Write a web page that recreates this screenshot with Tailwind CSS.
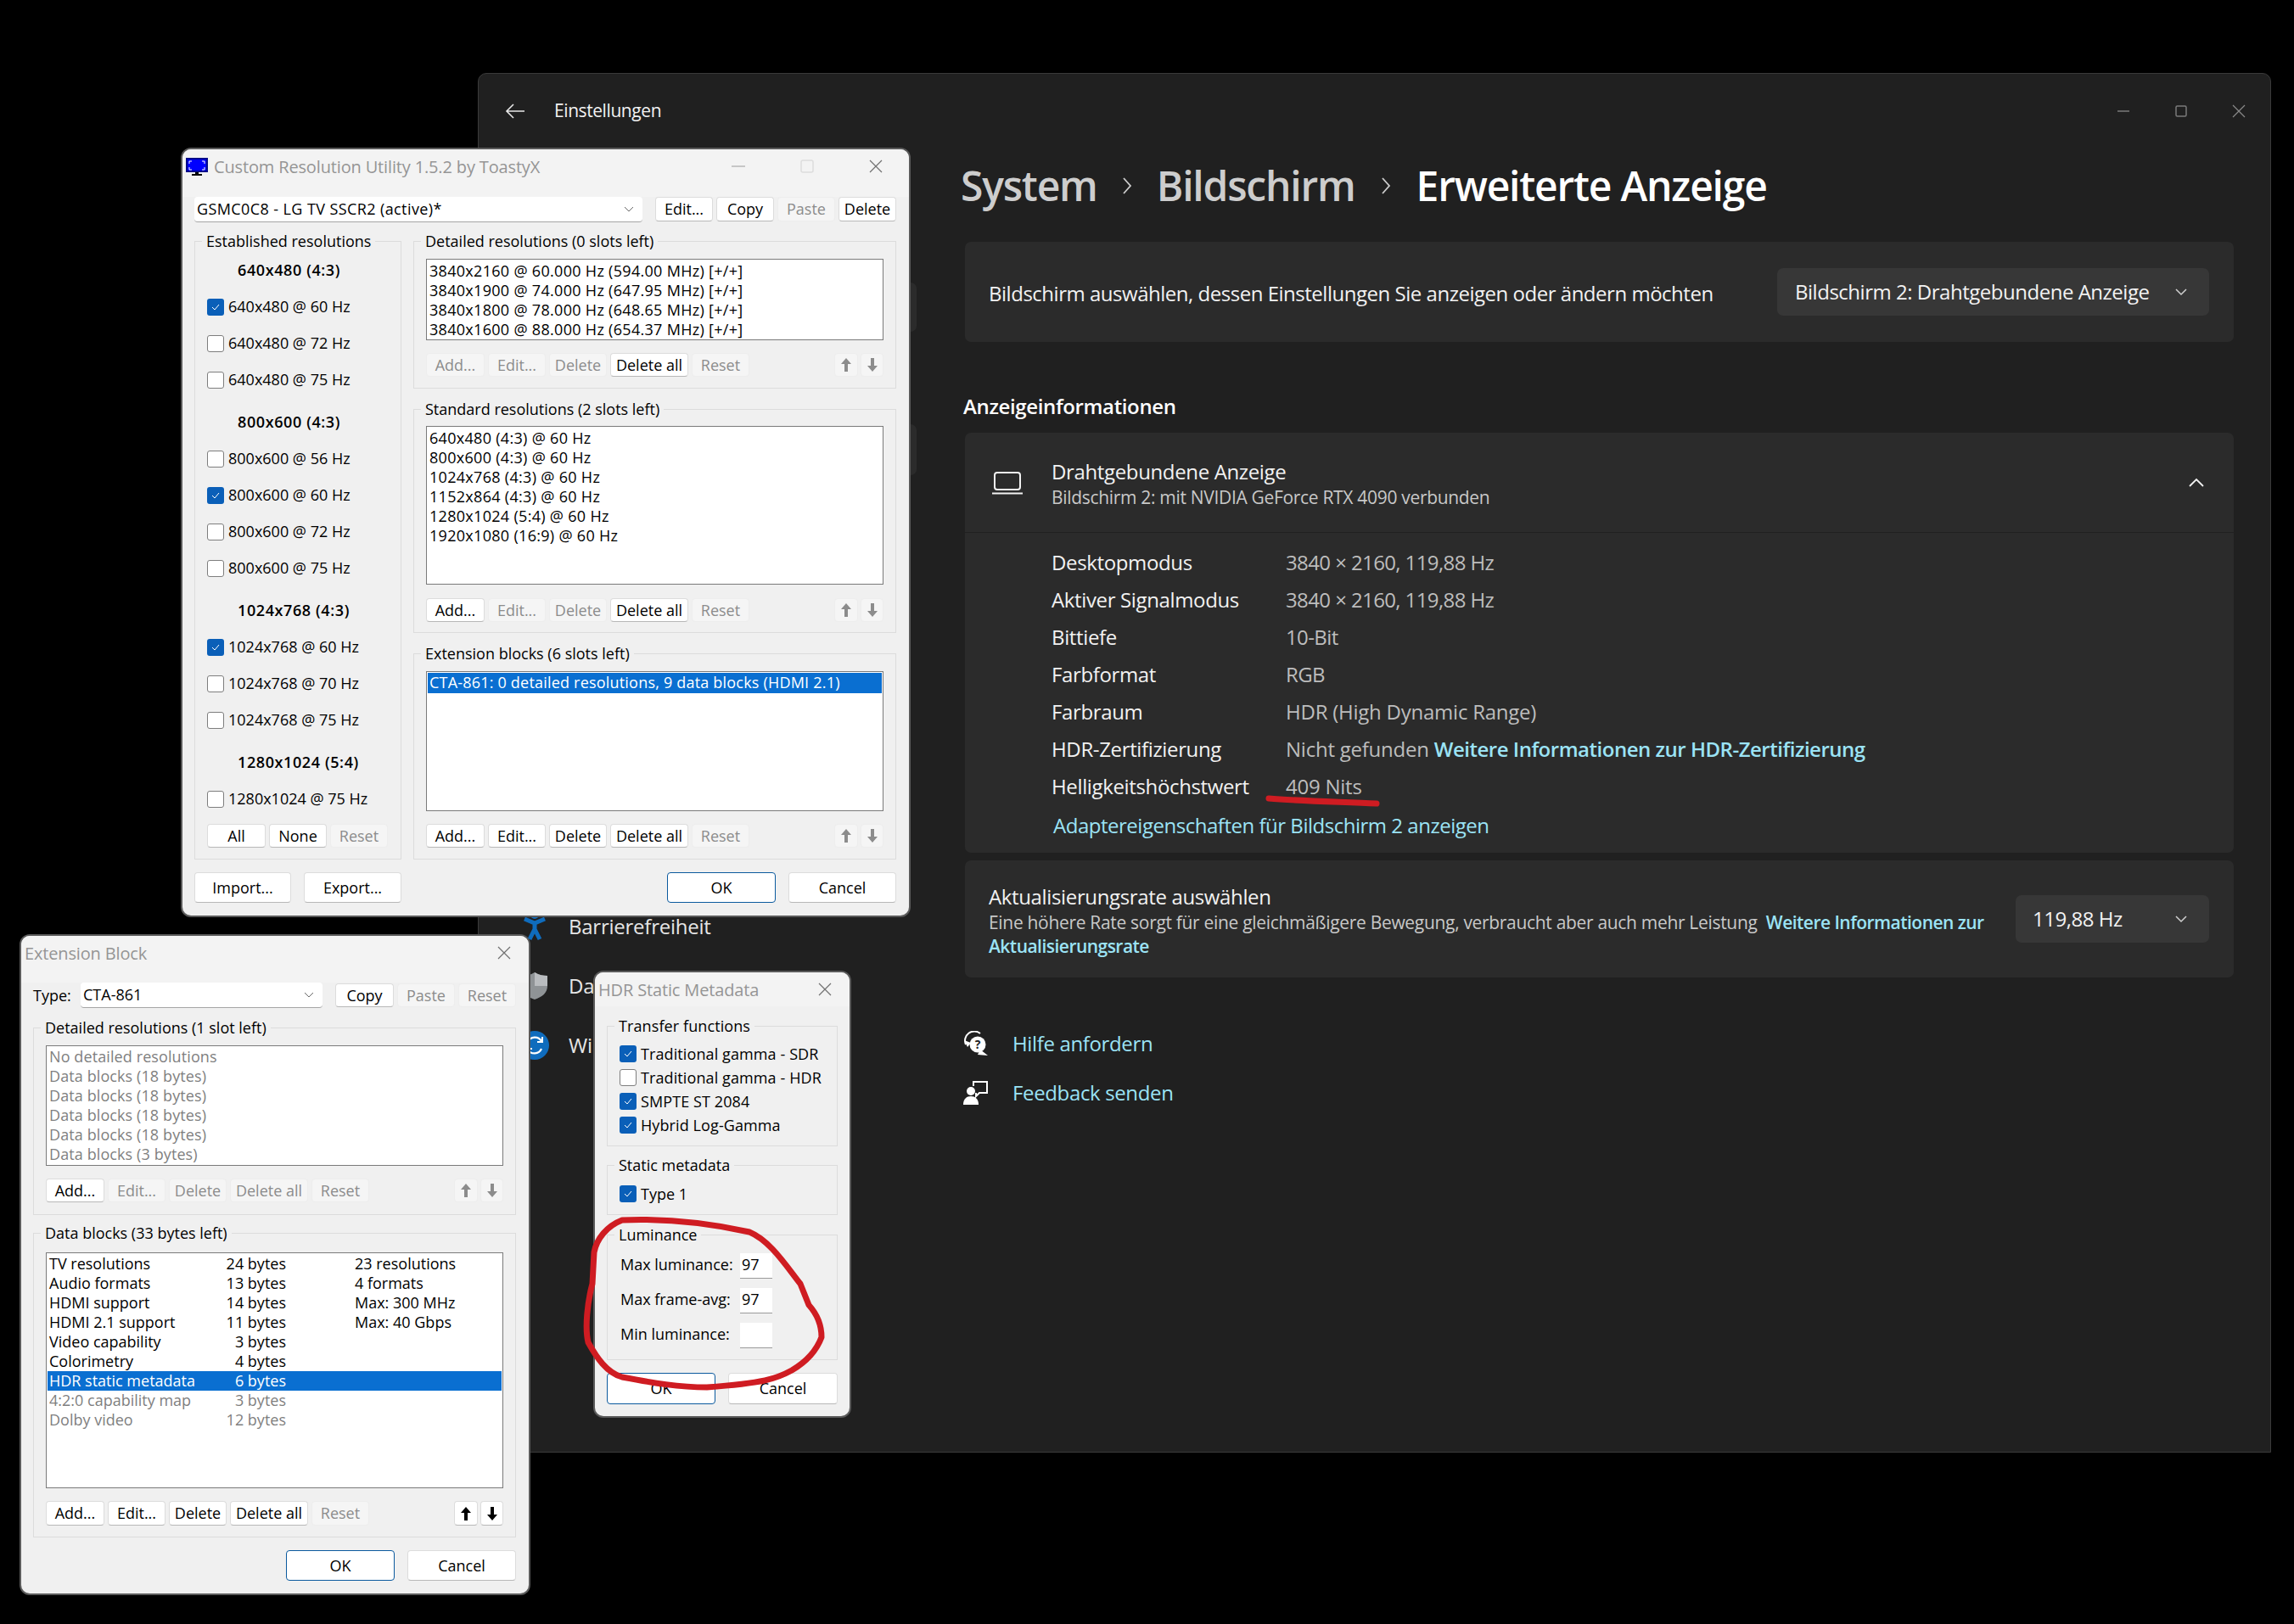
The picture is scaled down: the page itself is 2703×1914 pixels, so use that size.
<!DOCTYPE html>
<html lang="de">
<head>
  <meta charset="UTF-8" />
  <title>Erweiterte Anzeige</title>
  <script src="https://cdn.jsdelivr.net/npm/@tailwindcss/browser@4"></script>
</head>
<body class="bg-black">
<div class="relative w-[2703px] h-[1914px] overflow-hidden bg-black font-['Open_Sans','Noto_Sans',sans-serif]">

  <!-- settings window -->
  <div class="absolute left-[563px] top-[86px] w-[2113px] h-[1626px] bg-[#202020] border border-[#3a3a3a] rounded-t-[10px] text-white">
    <div class="flex items-center h-[87px]">
      <svg class="ml-[31px] w-[24px] h-[22px]" viewBox="0 0 24 22" fill="none" stroke="#e8e8e8" stroke-width="1.6"><path d="M23 11H2M10 3l-8 8 8 8"/></svg>
      <span class="ml-[34px] text-[21px] tracking-[-0.02em] text-[#f2f2f2]">Einstellungen</span>
      <div class="ml-auto flex items-center gap-[52px] pr-[29px]">
        <svg class="w-[16px] h-[16px]" viewBox="0 0 16 16" stroke="#7a7a7a" stroke-width="1.5"><path d="M1 8h14"/></svg>
        <svg class="w-[16px] h-[16px]" viewBox="0 0 16 16" fill="none" stroke="#7a7a7a" stroke-width="1.5"><rect x="2" y="2" width="12" height="12" rx="1.5"/></svg>
        <svg class="w-[16px] h-[16px]" viewBox="0 0 16 16" stroke="#8a8a8a" stroke-width="1.2"><path d="M1 1l14 14M15 1L1 15"/></svg>
      </div>
    </div>
    <div class="flex">
      <!-- nav, mostly covered by the dialogs -->
      <div class="w-[573px] shrink-0">
        <div class="h-[58px] mt-[159px] ml-[60px] w-[456px] rounded-[7px] bg-[#2b2b2b]"></div>
        <div class="h-[60px] mt-[109px] ml-[60px] w-[456px] rounded-[7px] bg-[#2b2b2b]"></div>
        <div class="mt-[497px] text-[24px] tracking-[-0.01em] text-[#e6e6e6]">
          <div class="flex items-center h-[70px] pl-[49px] gap-[23px]">
            <svg class="w-[34px] h-[34px]" viewBox="0 0 34 34" fill="none" stroke="#0f6cbd" stroke-width="5"><circle cx="17" cy="3" r="5" fill="#0f6cbd" stroke="none"/><path d="M5 8l12 5 12-5M17 13v7M17 20l-6 12M17 20l6 12"/></svg>
            <span>Barrierefreiheit</span>
          </div>
          <div class="flex items-center h-[70px] pl-[49px] gap-[23px]">
            <svg class="w-[34px] h-[34px]" viewBox="0 0 34 34"><path d="M17 1c5 3 10 4 15 4v12c0 8-6 13-15 16C8 30 2 25 2 17V5c5 0 10-1 15-4z" fill="#8f9396"/><path d="M17 1c5 3 10 4 15 4v12H17z" fill="#b9bcbf"/></svg>
            <span>Da</span>
          </div>
          <div class="flex items-center h-[70px] pl-[49px] gap-[23px]">
            <svg class="w-[34px] h-[34px]" viewBox="0 0 34 34" fill="none"><circle cx="17" cy="17" r="17" fill="#0f6cbd"/><path d="M9 13a9 9 0 0 1 16-1M25 21a9 9 0 0 1-16 1" stroke="#fff" stroke-width="2.2"/><path d="M26 7v6h-6M8 27v-6h6" stroke="#fff" stroke-width="2"/></svg>
            <span>Wi</span>
          </div>
        </div>
      </div>

      <!-- content -->
      <div class="w-[1495px] shrink-0">
        <div class="flex items-center h-[90px] -ml-[5px] text-[48px] font-semibold tracking-[-0.025em] text-[#cdcdcd]">
          <span>System</span>
          <svg class="mx-[29px] w-[12px] h-[22px]" viewBox="0 0 12 22" fill="none" stroke="#cdcdcd" stroke-width="1.8"><path d="M2 2l8 9-8 9"/></svg>
          <span>Bildschirm</span>
          <svg class="mx-[30px] w-[12px] h-[22px]" viewBox="0 0 12 22" fill="none" stroke="#cdcdcd" stroke-width="1.8"><path d="M2 2l8 9-8 9"/></svg>
          <span class="text-white">Erweiterte Anzeige</span>
        </div>

        <div class="mt-[21px] h-[118px] flex items-center justify-between pl-[28px] pr-[29px] bg-[#2b2b2b] rounded-[7px] text-[#f2f2f2]">
          <span class="text-[24px] tracking-[-0.02em] pt-[4px]">Bildschirm auswählen, dessen Einstellungen Sie anzeigen oder ändern möchten</span>
          <div class="w-[509px] h-[56px] flex items-center justify-between pl-[21px] pr-[26px] bg-[#373737] rounded-[7px] text-[24px] tracking-[-0.02em]">
            <span>Bildschirm 2: Drahtgebundene Anzeige</span>
            <svg class="w-[14px] h-[9px]" viewBox="0 0 14 9" fill="none" stroke="#d0d0d0" stroke-width="1.5"><path d="M1 1l6 6 6-6"/></svg>
          </div>
        </div>

        <div class="h-[107px] flex items-end pb-[14px] -ml-[2px] text-[24px] font-semibold tracking-[-0.015em] leading-[34px]">Anzeigeinformationen</div>

        <div class="h-[117px] flex items-center pl-[32px] pr-[35px] bg-[#2b2b2b] rounded-t-[7px]">
          <svg class="w-[36px] h-[28px]" viewBox="0 0 36 28" fill="none" stroke="#f2f2f2" stroke-width="2"><rect x="3" y="2" width="30" height="20" rx="3"/><path d="M0 26.5h36"/></svg>
          <div class="ml-[34px] flex-1 pt-[2px]">
            <div class="text-[24px] tracking-[-0.015em] leading-[32px] text-[#f2f2f2]">Drahtgebundene Anzeige</div>
            <div class="text-[21px] tracking-[-0.015em] leading-[28px] text-[#c8c8c8]">Bildschirm 2: mit NVIDIA GeForce RTX 4090 verbunden</div>
          </div>
          <svg class="w-[18px] h-[11px]" viewBox="0 0 18 11" fill="none" stroke="#f2f2f2" stroke-width="1.8"><path d="M1 10l8-8 8 8"/></svg>
        </div>
        <div class="mt-[1px] h-[377px] pt-[13px] pl-[102px] bg-[#2b2b2b] rounded-b-[7px] text-[24px] tracking-[-0.015em]">
          <div class="grid grid-cols-[276px_1fr] auto-rows-[44px] items-center text-[#f2f2f2]">
            <span>Desktopmodus</span><span class="text-[#bdbdbd] tracking-[-0.025em]">3840 × 2160, 119,88 Hz</span>
            <span>Aktiver Signalmodus</span><span class="text-[#bdbdbd] tracking-[-0.025em]">3840 × 2160, 119,88 Hz</span>
            <span>Bittiefe</span><span class="text-[#bdbdbd] tracking-[-0.025em]">10-Bit</span>
            <span>Farbformat</span><span class="text-[#bdbdbd] tracking-[-0.025em]">RGB</span>
            <span>Farbraum</span><span class="text-[#bdbdbd] tracking-[-0.01em]">HDR (High Dynamic Range)</span>
            <span>HDR-Zertifizierung</span><span class="text-[#bdbdbd] tracking-[-0.01em]">Nicht gefunden <span class="font-semibold text-[#9be3f5] tracking-[-0.02em]">Weitere Informationen zur HDR-Zertifizierung</span></span>
            <span>Helligkeitshöchstwert</span><span class="text-[#bdbdbd] tracking-[-0.01em]">409 Nits</span>
          </div>
          <div class="mt-[7px] ml-[2px] leading-[34px] text-[#9be3f5] tracking-[-0.02em]">Adaptereigenschaften für Bildschirm 2 anzeigen</div>
        </div>

        <div class="mt-[9px] h-[138px] flex items-center pl-[28px] pr-[29px] bg-[#2b2b2b] rounded-[7px]">
          <div class="flex-1 pt-[3px] text-[#f2f2f2]">
            <div class="text-[24px] tracking-[-0.015em] leading-[33px]">Aktualisierungsrate auswählen</div>
            <div class="text-[21px] tracking-[-0.015em] leading-[28px] text-[#c8c8c8] whitespace-nowrap">Eine höhere Rate sorgt für eine gleichmäßigere Bewegung, verbraucht aber auch mehr Leistung &nbsp;<span class="font-semibold text-[#9be3f5] tracking-[-0.025em]">Weitere Informationen zur</span></div>
            <div class="text-[21px] leading-[28px] font-semibold text-[#9be3f5] tracking-[-0.025em]">Aktualisierungsrate</div>
          </div>
          <div class="w-[228px] h-[56px] flex items-center justify-between pl-[20px] pr-[26px] bg-[#373737] rounded-[7px] text-[24px] tracking-[-0.02em] text-[#f2f2f2]">
            <span>119,88 Hz</span>
            <svg class="w-[14px] h-[9px]" viewBox="0 0 14 9" fill="none" stroke="#d0d0d0" stroke-width="1.5"><path d="M1 1l6 6 6-6"/></svg>
          </div>
        </div>

        <div class="mt-[56px] -ml-[2px] flex items-center h-[44px] gap-[28px] text-[24px] tracking-[-0.015em] text-[#9be3f5]">
          <svg class="w-[30px] h-[30px]" viewBox="0 0 30 30"><path d="M3 16A11 11 0 0 1 20 3" fill="none" stroke="#fff" stroke-width="2"/><path d="M1 11l4 8 4-5z" fill="#fff"/><circle cx="17" cy="16" r="9.5" fill="#fff"/><path d="M20 22l9 7-12-1z" fill="#fff"/><text x="17" y="21" font-size="14" font-weight="700" text-anchor="middle" fill="#202020">?</text></svg>
          <span>Hilfe anfordern</span>
        </div>
        <div class="mt-[14px] -ml-[2px] flex items-center h-[44px] gap-[28px] text-[24px] tracking-[-0.015em] text-[#9be3f5]">
          <svg class="w-[30px] h-[30px]" viewBox="0 0 30 30"><circle cx="9" cy="13" r="5" fill="#fff"/><path d="M0 29c0-7 4-10 9-10s9 3 9 10z" fill="#fff"/><path d="M12 7V2h16v13H19l-4 4v-4" fill="none" stroke="#fff" stroke-width="2"/></svg>
          <span>Feedback senden</span>
        </div>
      </div>
    </div>
  </div>

  <!-- Custom Resolution Utility -->
  <div class="absolute left-[215px] top-[176px] w-[856px] h-[903px] bg-[#f0f0f0] rounded-[10px] shadow-[0_0_0_2px_#5a5a5a] text-[18px] leading-[23px] text-black [&_button]:flex [&_button]:items-center [&_button]:justify-center [&_button]:rounded-[4px] [&_button]:bg-white [&_button]:border [&_button]:border-[#dcdcdc] [&_button]:border-b-[#b8b8b8] [&_button:disabled]:bg-[#f5f5f5] [&_button:disabled]:text-[#8c8c8c] [&_button:disabled]:border-[#ededed] [&_fieldset]:border [&_fieldset]:border-[#dcdcdc] [&_legend]:ml-[-6px] [&_legend]:px-[5px] [&_legend]:leading-[24px]">
    <div class="flex items-center h-[56px] bg-[#f3f3f3] rounded-t-[10px] pl-[4px] pb-[16px]">
      <svg class="w-[26px] h-[21px]" viewBox="0 0 26 21"><rect x="0" y="0" width="26" height="17" fill="#000a8a"/><rect x="2" y="2" width="22" height="13" fill="#0000ff"/><path d="M4 7V4h3M19 4h3v3M22 11v3h-3M7 14H4v-3" fill="none" stroke="#fff" stroke-width="1"/><path d="M11 17h4v2h4v2H7v-2h4z" fill="#000"/></svg>
      <span class="ml-[7px] text-[20px] tracking-[-0.15px] text-[#959595]">Custom Resolution Utility 1.5.2 by ToastyX</span>
      <div class="ml-auto flex items-center gap-[65px] pr-[31px]">
        <svg class="w-[16px] h-[16px]" viewBox="0 0 16 16" stroke="#9a9a9a" stroke-width="1"><path d="M0 8h16"/></svg>
        <svg class="w-[16px] h-[16px]" viewBox="0 0 16 16" fill="none" stroke="#dddddd" stroke-width="1.5"><rect x="1" y="1" width="14" height="14" rx="2"/></svg>
        <svg class="w-[16px] h-[16px]" viewBox="0 0 16 16" stroke="#707070" stroke-width="1.2"><path d="M1 1l14 14M15 1L1 15"/></svg>
      </div>
    </div>
    <div class="pl-[14px] pr-[15px]">
      <div class="flex h-[30px] items-stretch">
        <div class="w-[528px] flex items-center justify-between pl-[3px] pr-[10px] bg-white border-b border-[#a5a5a5] rounded-[4px]">
          <span class="tracking-[0.4px]">GSMC0C8 - LG TV SSCR2 (active)*</span>
          <svg class="w-[12px] h-[7px]" viewBox="0 0 12 7" fill="none" stroke="#6a6a6a" stroke-width="1"><path d="M1 1l5 5 5-5"/></svg>
        </div>
        <div class="ml-[15px] flex gap-[4px] h-[29px]">
          <button class="w-[68px]">Edit...</button>
          <button class="w-[68px]">Copy</button>
          <button class="w-[68px]" disabled>Paste</button>
          <button class="w-[68px]">Delete</button>
        </div>
      </div>

      <div class="mt-[10px] flex gap-[14px]">
        <fieldset class="w-[244px] h-[741px] pl-[14px]">
          <legend>Established resolutions</legend>
          <div class="pt-[1px]">
            <div class="h-[43px] pl-[36px] flex items-center font-semibold tracking-[0.6px]">640x480 (4:3)</div>
            <div class="h-[43px] flex items-center gap-[5px]"><span class="flex items-center justify-center w-[20px] h-[20px] rounded-[3px] bg-[#0a5fb8]"><svg class="w-[10px] h-[8px]" viewBox="0 0 10 8" fill="none" stroke="#fff" stroke-width="1"><path d="M1 4l3 3 5-6"/></svg></span>640x480 @ 60 Hz</div>
            <div class="h-[43px] flex items-center gap-[5px]"><span class="w-[20px] h-[20px] rounded-[3px] bg-white border border-[#7e7e7e]"></span>640x480 @ 72 Hz</div>
            <div class="h-[43px] flex items-center gap-[5px]"><span class="w-[20px] h-[20px] rounded-[3px] bg-white border border-[#7e7e7e]"></span>640x480 @ 75 Hz</div>
            <div class="h-[43px] mt-[7px] pl-[36px] flex items-center font-semibold tracking-[0.6px]">800x600 (4:3)</div>
            <div class="h-[43px] flex items-center gap-[5px]"><span class="w-[20px] h-[20px] rounded-[3px] bg-white border border-[#7e7e7e]"></span>800x600 @ 56 Hz</div>
            <div class="h-[43px] flex items-center gap-[5px]"><span class="flex items-center justify-center w-[20px] h-[20px] rounded-[3px] bg-[#0a5fb8]"><svg class="w-[10px] h-[8px]" viewBox="0 0 10 8" fill="none" stroke="#fff" stroke-width="1"><path d="M1 4l3 3 5-6"/></svg></span>800x600 @ 60 Hz</div>
            <div class="h-[43px] flex items-center gap-[5px]"><span class="w-[20px] h-[20px] rounded-[3px] bg-white border border-[#7e7e7e]"></span>800x600 @ 72 Hz</div>
            <div class="h-[43px] flex items-center gap-[5px]"><span class="w-[20px] h-[20px] rounded-[3px] bg-white border border-[#7e7e7e]"></span>800x600 @ 75 Hz</div>
            <div class="h-[43px] mt-[7px] pl-[36px] flex items-center font-semibold tracking-[0.6px]">1024x768 (4:3)</div>
            <div class="h-[43px] flex items-center gap-[5px]"><span class="flex items-center justify-center w-[20px] h-[20px] rounded-[3px] bg-[#0a5fb8]"><svg class="w-[10px] h-[8px]" viewBox="0 0 10 8" fill="none" stroke="#fff" stroke-width="1"><path d="M1 4l3 3 5-6"/></svg></span>1024x768 @ 60 Hz</div>
            <div class="h-[43px] flex items-center gap-[5px]"><span class="w-[20px] h-[20px] rounded-[3px] bg-white border border-[#7e7e7e]"></span>1024x768 @ 70 Hz</div>
            <div class="h-[43px] flex items-center gap-[5px]"><span class="w-[20px] h-[20px] rounded-[3px] bg-white border border-[#7e7e7e]"></span>1024x768 @ 75 Hz</div>
            <div class="h-[43px] mt-[7px] pl-[36px] flex items-center font-semibold tracking-[0.6px]">1280x1024 (5:4)</div>
            <div class="h-[43px] flex items-center gap-[5px]"><span class="w-[20px] h-[20px] rounded-[3px] bg-white border border-[#7e7e7e]"></span>1280x1024 @ 75 Hz</div>
          </div>
          <div class="mt-[8px] flex gap-[4px] h-[28px]">
            <button class="w-[69px]">All</button>
            <button class="w-[68px]">None</button>
            <button class="w-[68px]" disabled>Reset</button>
          </div>
        </fieldset>

        <div class="w-[569px] flex flex-col gap-[12px]">
          <fieldset class="h-[186px] px-[14px]">
            <legend>Detailed resolutions (0 slots left)</legend>
            <div class="mt-[9px] h-[96px] px-[3px] py-[2px] bg-white border border-[#7a7a7a] overflow-hidden tracking-[0.3px]">
              <div>3840x2160 @ 60.000 Hz (594.00 MHz) [+/+]</div>
              <div>3840x1900 @ 74.000 Hz (647.95 MHz) [+/+]</div>
              <div>3840x1800 @ 78.000 Hz (648.65 MHz) [+/+]</div>
              <div>3840x1600 @ 88.000 Hz (654.37 MHz) [+/+]</div>
            </div>
            <div class="mt-[15px] flex gap-[4px] h-[28px]">
              <button class="w-[69px]" disabled>Add...</button>
              <button class="w-[68px]" disabled>Edit...</button>
              <button class="w-[68px]" disabled>Delete</button>
              <button class="w-[92px]">Delete all</button>
              <button class="w-[68px]" disabled>Reset</button>
              <button class="w-[28px] ml-auto" disabled><svg class="w-[14px] h-[16px]" viewBox="0 0 14 16" fill="#8c8c8c"><path d="M7 0l6 7H9v9H5V7H1z"/></svg></button>
              <button class="w-[27px] -ml-[1px]" disabled><svg class="w-[14px] h-[16px]" viewBox="0 0 14 16" fill="#8c8c8c"><path d="M7 16l6-7H9V0H5v9H1z"/></svg></button>
            </div>
          </fieldset>

          <fieldset class="h-[276px] px-[14px]">
            <legend>Standard resolutions (2 slots left)</legend>
            <div class="mt-[8px] h-[187px] px-[3px] py-[2px] bg-white border border-[#7a7a7a] tracking-[0.3px]">
              <div>640x480 (4:3) @ 60 Hz</div>
              <div>800x600 (4:3) @ 60 Hz</div>
              <div>1024x768 (4:3) @ 60 Hz</div>
              <div>1152x864 (4:3) @ 60 Hz</div>
              <div>1280x1024 (5:4) @ 60 Hz</div>
              <div>1920x1080 (16:9) @ 60 Hz</div>
            </div>
            <div class="mt-[16px] flex gap-[4px] h-[28px]">
              <button class="w-[69px]">Add...</button>
              <button class="w-[68px]" disabled>Edit...</button>
              <button class="w-[68px]" disabled>Delete</button>
              <button class="w-[92px]">Delete all</button>
              <button class="w-[68px]" disabled>Reset</button>
              <button class="w-[28px] ml-auto" disabled><svg class="w-[14px] h-[16px]" viewBox="0 0 14 16" fill="#8c8c8c"><path d="M7 0l6 7H9v9H5V7H1z"/></svg></button>
              <button class="w-[27px] -ml-[1px]" disabled><svg class="w-[14px] h-[16px]" viewBox="0 0 14 16" fill="#8c8c8c"><path d="M7 16l6-7H9V0H5v9H1z"/></svg></button>
            </div>
          </fieldset>

          <fieldset class="h-[255px] px-[14px]">
            <legend>Extension blocks (6 slots left)</legend>
            <div class="mt-[9px] h-[165px] p-[1px] bg-white border border-[#7a7a7a] tracking-[0.2px]">
              <div class="h-[24px] px-[2px] bg-[#0a6fd1] text-white">CTA-861: 0 detailed resolutions, 9 data blocks (HDMI 2.1)</div>
            </div>
            <div class="mt-[15px] flex gap-[4px] h-[28px]">
              <button class="w-[69px]">Add...</button>
              <button class="w-[68px]">Edit...</button>
              <button class="w-[68px]">Delete</button>
              <button class="w-[92px]">Delete all</button>
              <button class="w-[68px]" disabled>Reset</button>
              <button class="w-[28px] ml-auto" disabled><svg class="w-[14px] h-[16px]" viewBox="0 0 14 16" fill="#8c8c8c"><path d="M7 0l6 7H9v9H5V7H1z"/></svg></button>
              <button class="w-[27px] -ml-[1px]" disabled><svg class="w-[14px] h-[16px]" viewBox="0 0 14 16" fill="#8c8c8c"><path d="M7 16l6-7H9V0H5v9H1z"/></svg></button>
            </div>
          </fieldset>
        </div>
      </div>

      <div class="mt-[15px] flex h-[36px]">
        <button class="w-[114px]">Import...</button>
        <button class="w-[115px] ml-[15px]">Export...</button>
        <button class="w-[128px] ml-auto !border-[#0b5a9e]">OK</button>
        <button class="w-[127px] ml-[15px]">Cancel</button>
      </div>
    </div>
  </div>

  <!-- Extension Block -->
  <div class="absolute left-[25px] top-[1103px] w-[598px] h-[775px] bg-[#f0f0f0] rounded-[10px] shadow-[0_0_0_2px_#5a5a5a] text-[18px] leading-[23px] text-black [&_button]:flex [&_button]:items-center [&_button]:justify-center [&_button]:rounded-[4px] [&_button]:bg-white [&_button]:border [&_button]:border-[#dcdcdc] [&_button]:border-b-[#b8b8b8] [&_button:disabled]:bg-[#f5f5f5] [&_button:disabled]:text-[#8c8c8c] [&_button:disabled]:border-[#ededed] [&_fieldset]:border [&_fieldset]:border-[#dcdcdc] [&_legend]:ml-[-6px] [&_legend]:px-[5px] [&_legend]:leading-[24px]">
    <div class="flex items-center h-[55px] bg-[#f3f3f3] rounded-t-[10px] pl-[4px] pb-[15px]">
      <span class="text-[20px] tracking-[-0.15px] text-[#959595]">Extension Block</span>
      <svg class="ml-auto mr-[21px] w-[16px] h-[16px]" viewBox="0 0 16 16" stroke="#707070" stroke-width="1.2"><path d="M1 1l14 14M15 1L1 15"/></svg>
    </div>
    <div class="pl-[14px] pr-[15px]">
      <div class="flex h-[30px] items-stretch">
        <span class="w-[56px] flex items-center">Type:</span>
        <div class="w-[285px] flex items-center justify-between pl-[3px] pr-[10px] bg-white border-b border-[#a5a5a5] rounded-[4px]">
          <span>CTA-861</span>
          <svg class="w-[12px] h-[7px]" viewBox="0 0 12 7" fill="none" stroke="#6a6a6a" stroke-width="1"><path d="M1 1l5 5 5-5"/></svg>
        </div>
        <div class="ml-[15px] flex gap-[4px] h-[28px] mt-[1px]">
          <button class="w-[69px]">Copy</button>
          <button class="w-[68px]" disabled>Paste</button>
          <button class="w-[68px]" disabled>Reset</button>
        </div>
      </div>

      <fieldset class="mt-[11px] h-[233px] px-[14px]">
        <legend>Detailed resolutions (1 slot left)</legend>
        <div class="mt-[9px] h-[142px] px-[3px] py-[1px] bg-white border border-[#7a7a7a] text-[#7f7f7f] tracking-[0.1px]">
          <div>No detailed resolutions</div>
          <div>Data blocks (18 bytes)</div>
          <div>Data blocks (18 bytes)</div>
          <div>Data blocks (18 bytes)</div>
          <div>Data blocks (18 bytes)</div>
          <div>Data blocks (3 bytes)</div>
        </div>
        <div class="mt-[15px] flex gap-[4px] h-[28px]">
          <button class="w-[69px]">Add...</button>
          <button class="w-[68px]" disabled>Edit...</button>
          <button class="w-[68px]" disabled>Delete</button>
          <button class="w-[92px]" disabled>Delete all</button>
          <button class="w-[68px]" disabled>Reset</button>
          <button class="w-[28px] ml-auto" disabled><svg class="w-[14px] h-[16px]" viewBox="0 0 14 16" fill="#8c8c8c"><path d="M7 0l6 7H9v9H5V7H1z"/></svg></button>
          <button class="w-[27px] -ml-[1px]" disabled><svg class="w-[14px] h-[16px]" viewBox="0 0 14 16" fill="#8c8c8c"><path d="M7 16l6-7H9V0H5v9H1z"/></svg></button>
        </div>
      </fieldset>

      <fieldset class="mt-[9px] h-[371px] px-[14px]">
        <legend>Data blocks (33 bytes left)</legend>
        <div class="mt-[11px] h-[278px] p-[1px] bg-white border border-[#7a7a7a] whitespace-nowrap">
          <div class="grid grid-cols-[195px_84px_1fr] px-[2px]"><span>TV resolutions</span><span class="text-right">24 bytes</span><span class="pl-[81px]">23 resolutions</span></div>
          <div class="grid grid-cols-[195px_84px_1fr] px-[2px]"><span>Audio formats</span><span class="text-right">13 bytes</span><span class="pl-[81px]">4 formats</span></div>
          <div class="grid grid-cols-[195px_84px_1fr] px-[2px]"><span>HDMI support</span><span class="text-right">14 bytes</span><span class="pl-[81px]">Max: 300 MHz</span></div>
          <div class="grid grid-cols-[195px_84px_1fr] px-[2px]"><span>HDMI 2.1 support</span><span class="text-right">11 bytes</span><span class="pl-[81px]">Max: 40 Gbps</span></div>
          <div class="grid grid-cols-[195px_84px_1fr] px-[2px]"><span>Video capability</span><span class="text-right">3 bytes</span></div>
          <div class="grid grid-cols-[195px_84px_1fr] px-[2px]"><span>Colorimetry</span><span class="text-right">4 bytes</span></div>
          <div class="grid grid-cols-[195px_84px_1fr] px-[2px] bg-[#0a6fd1] text-white"><span>HDR static metadata</span><span class="text-right">6 bytes</span></div>
          <div class="grid grid-cols-[195px_84px_1fr] px-[2px] text-[#7f7f7f]"><span>4:2:0 capability map</span><span class="text-right">3 bytes</span></div>
          <div class="grid grid-cols-[195px_84px_1fr] px-[2px] text-[#7f7f7f]"><span>Dolby video</span><span class="text-right">12 bytes</span></div>
        </div>
        <div class="mt-[15px] flex gap-[4px] h-[29px]">
          <button class="w-[69px]">Add...</button>
          <button class="w-[68px]">Edit...</button>
          <button class="w-[68px]">Delete</button>
          <button class="w-[92px]">Delete all</button>
          <button class="w-[68px]" disabled>Reset</button>
          <button class="w-[28px] ml-auto"><svg class="w-[14px] h-[16px]" viewBox="0 0 14 16" fill="#000"><path d="M7 0l6 7H9v9H5V7H1z"/></svg></button>
          <button class="w-[27px] -ml-[1px]"><svg class="w-[14px] h-[16px]" viewBox="0 0 14 16" fill="#000"><path d="M7 16l6-7H9V0H5v9H1z"/></svg></button>
        </div>
      </fieldset>

      <div class="mt-[15px] flex justify-end gap-[15px] h-[36px]">
        <button class="w-[128px] !border-[#0b5a9e]">OK</button>
        <button class="w-[128px]">Cancel</button>
      </div>
    </div>
  </div>

  <!-- HDR Static Metadata -->
  <div class="absolute left-[701px] top-[1146px] w-[300px] h-[523px] bg-[#f0f0f0] rounded-[10px] shadow-[0_0_0_2px_#5a5a5a] text-[18px] leading-[23px] text-black [&_button]:flex [&_button]:items-center [&_button]:justify-center [&_button]:rounded-[4px] [&_button]:bg-white [&_button]:border [&_button]:border-[#dcdcdc] [&_button]:border-b-[#b8b8b8] [&_fieldset]:border [&_fieldset]:border-[#dcdcdc] [&_legend]:ml-[-6px] [&_legend]:px-[5px] [&_legend]:leading-[24px]">
    <div class="flex items-center h-[40px] bg-[#f3f3f3] rounded-t-[10px] pl-[4px]">
      <span class="text-[20px] tracking-[-0.15px] text-[#959595]">HDR Static Metadata</span>
      <svg class="ml-auto mr-[21px] w-[16px] h-[16px]" viewBox="0 0 16 16" stroke="#707070" stroke-width="1.2"><path d="M1 1l14 14M15 1L1 15"/></svg>
    </div>
    <div class="pt-[11px] pl-[14px] pr-[14px]">
      <fieldset class="h-[154px] pl-[14px] tracking-[0.1px]">
        <legend>Transfer functions</legend>
        <div class="pt-[7px]">
          <div class="h-[28px] flex items-center gap-[5px] whitespace-nowrap"><span class="flex items-center justify-center w-[20px] h-[20px] rounded-[3px] bg-[#0a5fb8]"><svg class="w-[10px] h-[8px]" viewBox="0 0 10 8" fill="none" stroke="#fff" stroke-width="1"><path d="M1 4l3 3 5-6"/></svg></span>Traditional gamma - SDR</div>
          <div class="h-[28px] flex items-center gap-[5px] whitespace-nowrap"><span class="w-[20px] h-[20px] rounded-[3px] bg-white border border-[#7e7e7e]"></span>Traditional gamma - HDR</div>
          <div class="h-[28px] flex items-center gap-[5px]"><span class="flex items-center justify-center w-[20px] h-[20px] rounded-[3px] bg-[#0a5fb8]"><svg class="w-[10px] h-[8px]" viewBox="0 0 10 8" fill="none" stroke="#fff" stroke-width="1"><path d="M1 4l3 3 5-6"/></svg></span>SMPTE ST 2084</div>
          <div class="h-[28px] flex items-center gap-[5px]"><span class="flex items-center justify-center w-[20px] h-[20px] rounded-[3px] bg-[#0a5fb8]"><svg class="w-[10px] h-[8px]" viewBox="0 0 10 8" fill="none" stroke="#fff" stroke-width="1"><path d="M1 4l3 3 5-6"/></svg></span>Hybrid Log-Gamma</div>
        </div>
      </fieldset>
      <fieldset class="mt-[10px] h-[71px] pl-[14px]">
        <legend>Static metadata</legend>
        <div class="pt-[8px]">
          <div class="h-[28px] flex items-center gap-[5px]"><span class="flex items-center justify-center w-[20px] h-[20px] rounded-[3px] bg-[#0a5fb8]"><svg class="w-[10px] h-[8px]" viewBox="0 0 10 8" fill="none" stroke="#fff" stroke-width="1"><path d="M1 4l3 3 5-6"/></svg></span>Type 1</div>
        </div>
      </fieldset>
      <fieldset class="mt-[11px] h-[160px] pl-[14px]">
        <legend>Luminance</legend>
        <div class="pt-[10px] pl-[1px] flex flex-col gap-[11px]">
          <div class="flex items-center h-[30px]"><span class="w-[141px] pb-[3px]">Max luminance:</span><span class="w-[38px] h-[30px] pl-[2px] pb-[3px] flex items-center bg-white border-b border-[#9a9a9a]">97</span></div>
          <div class="flex items-center h-[30px]"><span class="w-[141px] pb-[3px]">Max frame-avg:</span><span class="w-[38px] h-[30px] pl-[2px] pb-[3px] flex items-center bg-white border-b border-[#9a9a9a]">97</span></div>
          <div class="flex items-center h-[30px]"><span class="w-[141px] pb-[3px]">Min luminance:</span><span class="w-[38px] h-[30px] bg-white border-b border-[#9a9a9a]"></span></div>
        </div>
      </fieldset>
      <div class="mt-[15px] flex gap-[15px] h-[37px]">
        <button class="w-[128px] !border-[#0b5a9e]">OK</button>
        <button class="w-[129px]">Cancel</button>
      </div>
    </div>
  </div>

  <!-- red marker strokes drawn over the windows -->
  <svg class="absolute inset-0 pointer-events-none" width="2703" height="1914" viewBox="0 0 2703 1914" fill="none" stroke="#cf1c22" stroke-linecap="round" stroke-linejoin="round">
    <path stroke-width="7" d="M1495 941C1530 944 1580 945 1622 947"/>
    <path stroke-width="7" d="M733 1438C780 1436 833 1441 883 1452C907 1462 925 1490 943 1513L953 1538C962 1548 968 1562 968 1576C962 1592 950 1605 933 1615C915 1625 900 1630 833 1635C800 1635 770 1630 733 1623C715 1618 703 1600 693 1582C689 1565 692 1535 698 1513L700 1476C703 1460 715 1445 733 1438Z"/>
  </svg>
</div>
</body>
</html>
